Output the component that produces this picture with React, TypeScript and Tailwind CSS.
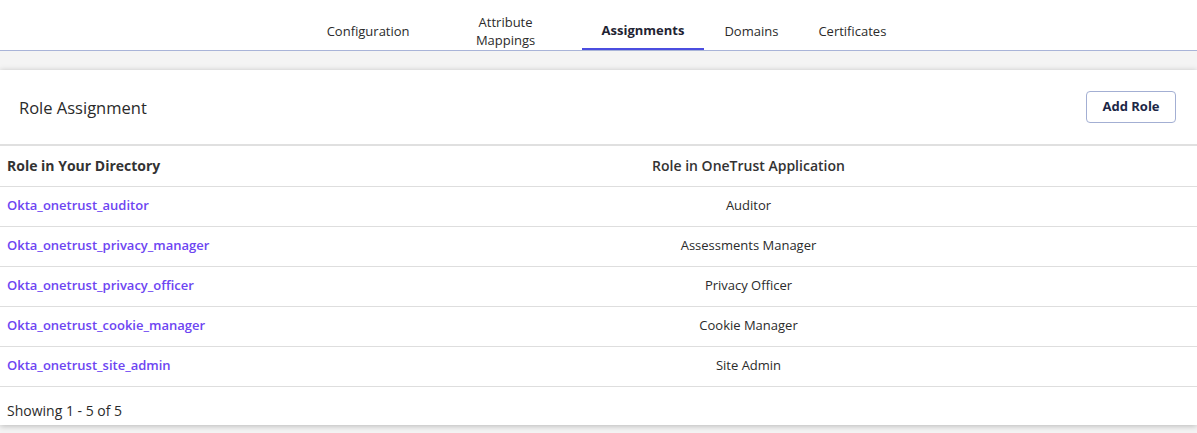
const TABS = [
  { label: "Configuration" },
  { label: "Attribute Mappings", narrow: true },
  { label: "Assignments", active: true },
  { label: "Domains" },
  { label: "Certificates" },
];

const ROLES = [
  { directory: "Okta_onetrust_auditor", app: "Auditor" },
  { directory: "Okta_onetrust_privacy_manager", app: "Assessments Manager" },
  { directory: "Okta_onetrust_privacy_officer", app: "Privacy Officer" },
  { directory: "Okta_onetrust_cookie_manager", app: "Cookie Manager" },
  { directory: "Okta_onetrust_site_admin", app: "Site Admin" },
];

export default function App() {
  return (
    <div className="min-h-[433px] bg-[#f4f4f4] font-['Open_Sans',sans-serif] text-[#333]">
      <nav className="flex h-[51px] justify-center border-b border-[#a9b4d8] bg-white pl-4">
        {TABS.map((tab) => (
          <button
            key={tab.label}
            className={`flex h-[50px] items-center justify-center px-5 pt-3 text-center text-[13px] leading-[18px] ${
              tab.narrow ? "w-[152px]" : ""
            } ${
              tab.active
                ? "border-b-2 border-[#4b4de0] font-bold text-[#1f2433]"
                : "text-[#2b2b2b]"
            }`}
          >
            {tab.label}
          </button>
        ))}
      </nav>

      <div className="pt-[19px] pb-[8px]">
        <section className="bg-white shadow-[0_1px_6px_rgba(0,0,0,0.25)]">
          <header className="flex h-[76px] items-center justify-between border-b-2 border-[#e0e0e0] pl-[19px] pr-[21px]">
            <h2 className="pt-[2px] text-[16.5px] text-[#2a2a2a]">Role Assignment</h2>
            <button className="h-[32px] w-[90px] rounded-[4px] border border-[#a3afd3] text-[13px] font-bold text-[#1c2747]">
              Add Role
            </button>
          </header>

          <table className="w-full border-collapse text-[13px]">
            <thead>
              <tr className="h-[40px] border-b border-[#dedede] text-[14px] text-[#333]">
                <th className="w-[300px] pl-[7px] text-left font-bold">Role in Your Directory</th>
                <th className="text-center font-semibold">Role in OneTrust Application</th>
              </tr>
            </thead>
            <tbody>
              {ROLES.map((r) => (
                <tr key={r.directory} className="h-[40px] border-b border-[#dedede]">
                  <td className="pl-[7px] font-semibold text-[#6d45f2]">{r.directory}</td>
                  <td className="text-center text-[#2b2b2b]">{r.app}</td>
                </tr>
              ))}
            </tbody>
          </table>

          <footer className="flex h-[38px] items-center pl-[7px] pt-[10px] text-[14px] text-[#2b2b2b]">
            Showing 1 - 5 of 5
          </footer>
        </section>
      </div>
    </div>
  );
}
